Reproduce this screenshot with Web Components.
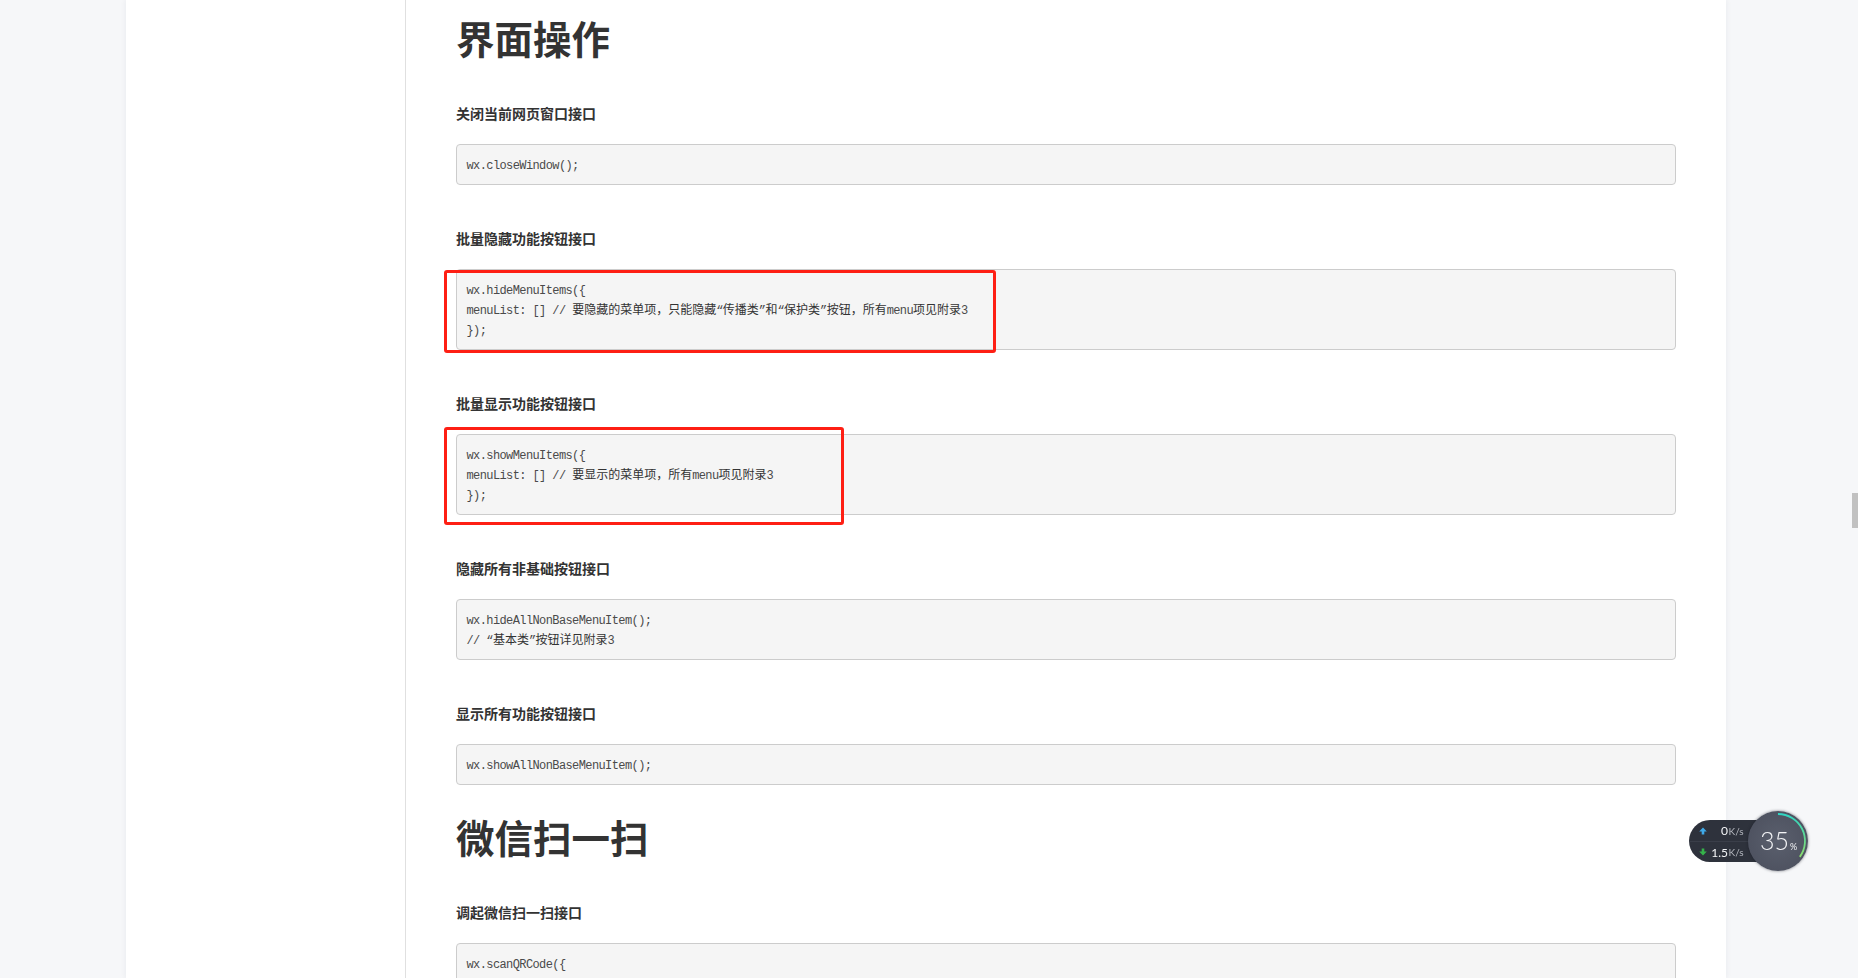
<!DOCTYPE html>
<html lang="zh">
<head>
<meta charset="utf-8">
<title>界面操作</title>
<style>
  html, body { margin: 0; height: 978px; overflow: hidden; background: #f6f7f9; }
  body { font-family: "Noto Sans CJK SC", "Liberation Sans", sans-serif; color: #333; }
</style>
</head>
<body>
<doc-page>
  <doc-title>界面操作</doc-title>

  <doc-api>关闭当前网页窗口接口</doc-api>
  <code-block>wx.closeWindow();</code-block>

  <doc-api>批量隐藏功能按钮接口</doc-api>
  <mark-box style="--left:-12px; --top:270px; --w:552px; --h:83px;"></mark-box>
  <code-block>wx.hideMenuItems({
menuList: [] // <zh-run>要隐藏的菜单项，只能隐藏</zh-run>“<zh-run>传播类</zh-run>”<zh-run>和</zh-run>“<zh-run>保护类</zh-run>”<zh-run>按钮，所有</zh-run>menu<zh-run>项见附录</zh-run>3
});</code-block>

  <doc-api>批量显示功能按钮接口</doc-api>
  <mark-box style="--left:-12px; --top:427px; --w:400px; --h:98px;"></mark-box>
  <code-block>wx.showMenuItems({
menuList: [] // <zh-run>要显示的菜单项，所有</zh-run>menu<zh-run>项见附录</zh-run>3
});</code-block>

  <doc-api>隐藏所有非基础按钮接口</doc-api>
  <code-block>wx.hideAllNonBaseMenuItem();
// “<zh-run>基本类</zh-run>”<zh-run>按钮详见附录</zh-run>3</code-block>

  <doc-api>显示所有功能按钮接口</doc-api>
  <code-block>wx.showAllNonBaseMenuItem();</code-block>

  <doc-title style="margin-top:30px">微信扫一扫</doc-title>

  <doc-api>调起微信扫一扫接口</doc-api>
  <code-block>wx.scanQRCode({
needResult: 0,
scanType: ["qrCode","barCode"],
});</code-block>
</doc-page>
<net-meter percent="35" up="0" down="1.5"></net-meter>
<scroll-thumb></scroll-thumb>

<script>
class DocPage extends HTMLElement {
  constructor() {
    super();
    this.attachShadow({ mode: 'open' }).innerHTML = `
      <style>
        :host {
          display: grid;
          grid-template-columns: 280px 1320px;
          width: 1600px;
          height: 978px;
          margin-left: 126px;
          background: #fff;
          box-shadow: 0 0 6px rgba(30, 40, 70, 0.07);
          overflow: hidden;
        }
        .side { border-right: 1px solid #e0e0e0; box-sizing: border-box; }
        .main { position: relative; padding: 0 50px; }
      </style>
      <div class="side"></div>
      <div class="main"><slot></slot></div>
    `;
  }
}

class DocTitle extends HTMLElement {
  constructor() {
    super();
    this.attachShadow({ mode: 'open' }).innerHTML = `
      <style>
        :host {
          display: block;
          margin: 16px 0 45px;
          font-size: 38.5px;
          line-height: 42px;
          font-weight: 700;
          color: #333;
        }
      </style>
      <slot></slot>
    `;
  }
}

class DocApi extends HTMLElement {
  constructor() {
    super();
    this.attachShadow({ mode: 'open' }).innerHTML = `
      <style>
        :host {
          display: block;
          margin: 43px 0 21px;
          font-size: 14px;
          line-height: 20px;
          font-weight: 700;
          color: #333;
        }
      </style>
      <slot></slot>
    `;
  }
}

// white-space: pre is inherited, so the shadow root must hold no stray whitespace
class CodeBlock extends HTMLElement {
  constructor() {
    super();
    this.attachShadow({ mode: 'open' }).innerHTML = `<style>
        :host {
          display: block;
          padding: 10.5px 9.5px 8.5px;
          width: 1220px;
          box-sizing: border-box;
          background: #f5f5f5;
          border: 1px solid #ccc;
          border-radius: 4px;
          font: 12px/20px "Liberation Mono", "Noto Sans CJK SC", monospace;
          letter-spacing: -0.6px;
          color: #4a4a4a;
          white-space: pre;
        }
      </style><slot></slot>`;
  }
}

// CJK glyphs come from the fallback font, so the line height stays that of the mono font
class ZhRun extends HTMLElement {
  constructor() {
    super();
    this.attachShadow({ mode: 'open' }).innerHTML = `<style>
        :host { letter-spacing: 0; color: #333; }
      </style><slot></slot>`;
  }
}

// red annotation drawn over the screenshot
class MarkBox extends HTMLElement {
  constructor() {
    super();
    this.attachShadow({ mode: 'open' }).innerHTML = `
      <style>
        :host {
          position: absolute;
          left: calc(50px + var(--left));
          top: var(--top);
          width: var(--w);
          height: var(--h);
          box-sizing: border-box;
          border: 3px solid #fe1f14;
          border-radius: 3px;
          pointer-events: none;
          z-index: 2;
        }
      </style>
    `;
  }
}

class NetMeter extends HTMLElement {
  constructor() {
    super();
    const percent = this.getAttribute('percent');
    const up = this.getAttribute('up');
    const down = this.getAttribute('down');
    this.attachShadow({ mode: 'open' }).innerHTML = `
      <style>
        :host {
          position: fixed;
          left: 1689px;
          top: 811px;
          width: 119px;
          height: 60px;
          font-family: Lato, "Liberation Sans", sans-serif;
          color: #fff;
        }
        .pill {
          position: absolute;
          left: 0;
          top: 9px;
          width: 80px;
          height: 42px;
          background: #2e323c;
          border-radius: 21px 0 0 21px;
          display: grid;
          grid-template-rows: 1fr 1fr;
          font-size: 12px;
        }
        .row {
          display: flex;
          align-items: center;
          padding-left: 10px;
        }
        .row + .row { border-top: 1px solid #3a3e49; }
        .row svg { width: 8px; height: 8px; flex: none; }
        .val { width: 21px; text-align: right; color: #f4f5f7; white-space: nowrap; }
        .unit { color: #b4b7be; font-size: 10px; margin-left: 0.5px; }
        .dial {
          position: absolute;
          left: 59px;
          top: 0;
          width: 60px;
          height: 60px;
          border-radius: 50%;
          background: radial-gradient(circle at 50% 50%, #5a5f6d, #4a4e5c);
          box-shadow: 0 0 3px rgba(20, 24, 32, 0.55);
        }
        .dial svg { position: absolute; inset: 0; }
        .num {
          position: absolute;
          left: 12px;
          top: 15px;
          font-size: 25px;
          line-height: 28px;
          font-weight: 300;
          color: #f2f3f5;
          white-space: nowrap;
        }
        .pct { font-size: 9px; font-weight: 400; margin-left: 1px; }
      </style>
      <div class="pill">
        <div class="row">
          <svg viewBox="0 0 8 8"><path d="M4 0.5 7.8 4.4H5.3V7.5H2.7V4.4H0.2Z" fill="#3fa9e8"/></svg>
          <span class="val">${up}</span><span class="unit">K/s</span>
        </div>
        <div class="row">
          <svg viewBox="0 0 8 8"><path d="M4 7.5 7.8 3.6H5.3V0.5H2.7V3.6H0.2Z" fill="#35b24a"/></svg>
          <span class="val">${down}</span><span class="unit">K/s</span>
        </div>
      </div>
      <div class="dial">
        <svg viewBox="0 0 60 60" width="60" height="60">
          <defs>
            <linearGradient id="arc" x1="0" y1="0" x2="0" y2="1">
              <stop offset="0" stop-color="#2fd6c3"/>
              <stop offset="1" stop-color="#8bdc6c"/>
            </linearGradient>
          </defs>
          <path d="M30 3A27 27 0 0 1 51.8 45.9" fill="none" stroke="url(#arc)" stroke-width="1.8"/>
        </svg>
        <span class="num">${percent}<span class="pct">%</span></span>
      </div>
    `;
  }
}

class ScrollThumb extends HTMLElement {
  constructor() {
    super();
    this.attachShadow({ mode: 'open' }).innerHTML = `
      <style>
        :host {
          position: fixed;
          left: 1852px;
          top: 493px;
          width: 6px;
          height: 35px;
          background: #c1c1c1;
        }
      </style>
    `;
  }
}

customElements.define('doc-page', DocPage);
customElements.define('doc-title', DocTitle);
customElements.define('doc-api', DocApi);
customElements.define('code-block', CodeBlock);
customElements.define('zh-run', ZhRun);
customElements.define('mark-box', MarkBox);
customElements.define('net-meter', NetMeter);
customElements.define('scroll-thumb', ScrollThumb);
</script>
</body>
</html>
